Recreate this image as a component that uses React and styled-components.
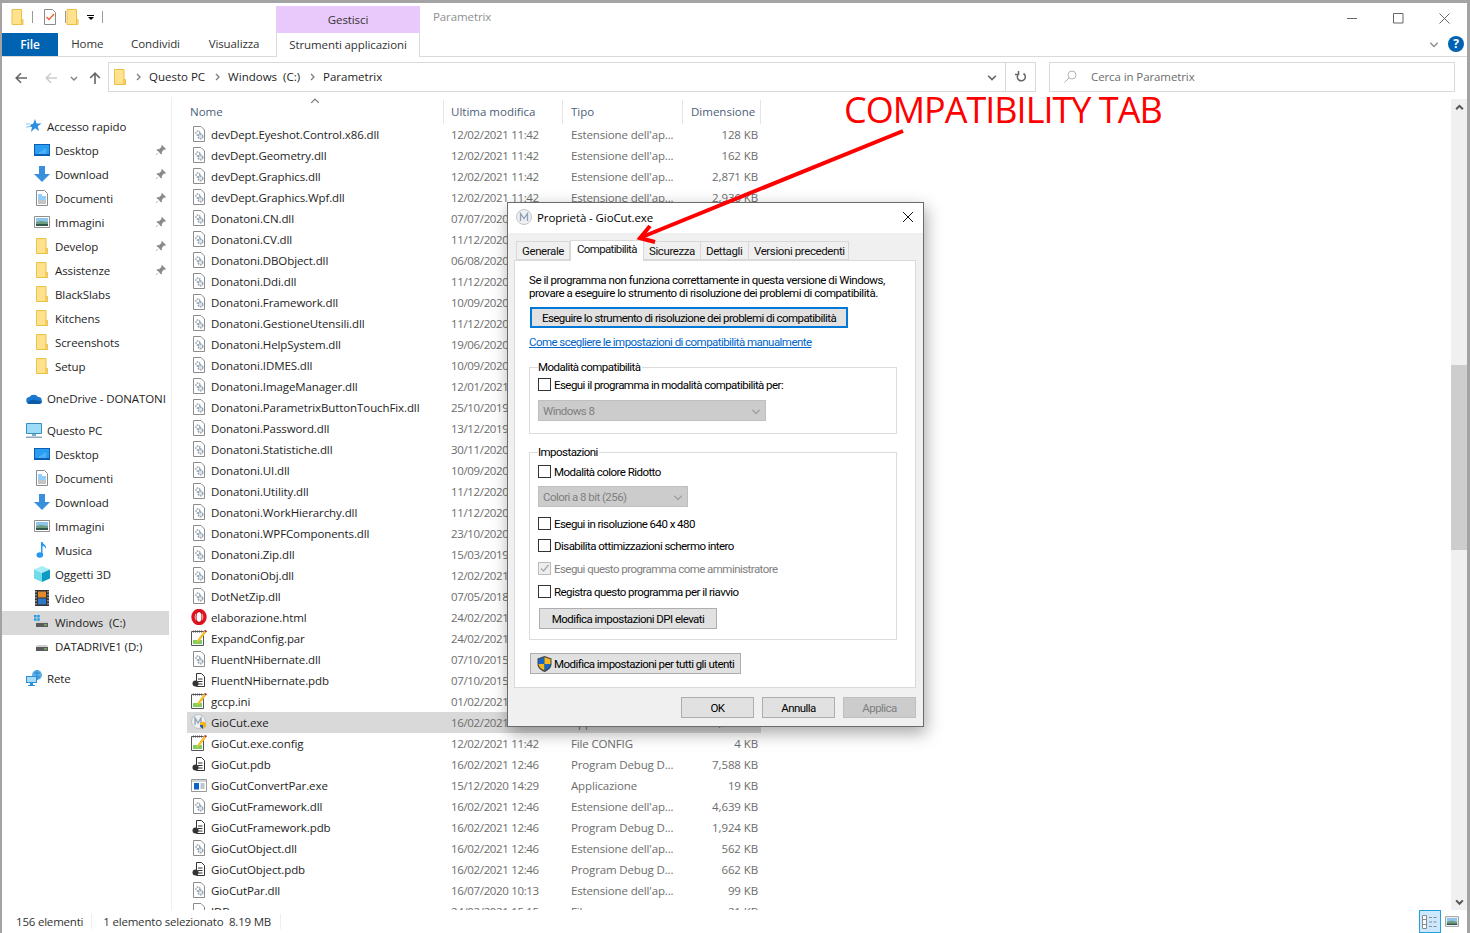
import React from "react"
import styled, { createGlobalStyle } from "styled-components"

const GlobalStyle = createGlobalStyle`
  html, body { margin: 0; padding: 0; background: #a3a3a3; }
  * { box-sizing: border-box; }
  body { font-family: "Open Sans", "Noto Sans", sans-serif; font-size: 11.5px; letter-spacing: -0.1px; }
`

const columns = "257px 119px 120px 78px"

const files = [
  ["dll", "devDept.Eyeshot.Control.x86.dll", "12/02/2021 11:42", "128 KB"],
  ["dll", "devDept.Geometry.dll", "12/02/2021 11:42", "162 KB"],
  ["dll", "devDept.Graphics.dll", "12/02/2021 11:42", "2,871 KB"],
  ["dll", "devDept.Graphics.Wpf.dll", "12/02/2021 11:42", "2,936 KB"],
  ["dll", "Donatoni.CN.dll", "07/07/2020"],
  ["dll", "Donatoni.CV.dll", "11/12/2020"],
  ["dll", "Donatoni.DBObject.dll", "06/08/2020"],
  ["dll", "Donatoni.Ddi.dll", "11/12/2020"],
  ["dll", "Donatoni.Framework.dll", "10/09/2020"],
  ["dll", "Donatoni.GestioneUtensili.dll", "11/12/2020"],
  ["dll", "Donatoni.HelpSystem.dll", "19/06/2020"],
  ["dll", "Donatoni.IDMES.dll", "10/09/2020"],
  ["dll", "Donatoni.ImageManager.dll", "12/01/2021"],
  ["dll", "Donatoni.ParametrixButtonTouchFix.dll", "25/10/2019"],
  ["dll", "Donatoni.Password.dll", "13/12/2019"],
  ["dll", "Donatoni.Statistiche.dll", "30/11/2020"],
  ["dll", "Donatoni.UI.dll", "10/09/2020"],
  ["dll", "Donatoni.Utility.dll", "11/12/2020"],
  ["dll", "Donatoni.WorkHierarchy.dll", "11/12/2020"],
  ["dll", "Donatoni.WPFComponents.dll", "23/10/2020"],
  ["dll", "Donatoni.Zip.dll", "15/03/2019"],
  ["dll", "DonatoniObj.dll", "12/02/2021"],
  ["dll", "DotNetZip.dll", "07/05/2018"],
  ["opera", "elaborazione.html", "24/02/2021"],
  ["cfg", "ExpandConfig.par", "24/02/2021"],
  ["dll", "FluentNHibernate.dll", "07/10/2015"],
  ["pdb", "FluentNHibernate.pdb", "07/10/2015"],
  ["cfg", "gccp.ini", "01/02/2021"],
  ["gio", "GioCut.exe", "16/02/2021 12:46", "8,389 KB", "Applicazione"],
  ["cfg", "GioCut.exe.config", "12/02/2021 11:42", "4 KB", "File CONFIG"],
  ["pdb", "GioCut.pdb", "16/02/2021 12:46", "7,588 KB"],
  ["app", "GioCutConvertPar.exe", "15/12/2020 14:29", "19 KB", "Applicazione"],
  ["dll", "GioCutFramework.dll", "16/02/2021 12:46", "4,639 KB"],
  ["pdb", "GioCutFramework.pdb", "16/02/2021 12:46", "1,924 KB"],
  ["dll", "GioCutObject.dll", "16/02/2021 12:46", "562 KB"],
  ["pdb", "GioCutObject.pdb", "16/02/2021 12:46", "662 KB"],
  ["dll", "GioCutPar.dll", "16/07/2020 10:13", "99 KB"],
  ["blank", "IDB", "24/02/2021 15:15", "21 KB", "File"],
]

const typeByKind = {
  dll: "Estensione dell'ap...",
  pdb: "Program Debug D...",
  cfg: "File",
  opera: "Opera Web Docu...",
}

/* icons */
const FolderIcon = ({ w = 12, h = 16 }) => (
  <svg width={w} height={h} viewBox="0 0 12 16">
    <path d="M.5.5h9.5v15H.5z" fill="#ffe28e" stroke="#ecc044" />
    <path d="M10 10.5h1.5v5H10z" fill="#ffe28e" stroke="#ecc044" />
  </svg>
)

const DllIcon = () => (
  <svg width="14" height="16" viewBox="0 0 14 16">
    <path d="M1.500.5h7.500l3.500 3.500v11.500h-11z" fill="#fff" stroke="#8c8c8c" />
    <circle cx="6" cy="7" r="2" fill="none" stroke="#8fa3b5" strokeWidth="1.400" strokeDasharray="1.600 .8" />
    <circle cx="8.500" cy="10.500" r="2.400" fill="#dce4ea" stroke="#8f9aa5" strokeWidth="1.200" strokeDasharray="1.600 .8" />
  </svg>
)

const PdbIcon = () => (
  <svg width="14" height="16" viewBox="0 0 14 16">
    <path d="M4.500 1.500h5l3 3v10h-8z" fill="#fff" stroke="#333" />
    <path d="M6 7h4.500M6 9.500h4.500M6 12h4.500" stroke="#333" />
    <circle cx="3.500" cy="11.500" r="3" fill="#333" />
  </svg>
)

const CfgIcon = () => (
  <svg width="16" height="16" viewBox="0 0 16 16">
    <path d="M.5 1.500h12v14H.5z" fill="#fff" stroke="#555" />
    <path d="M2 1.500h9" stroke="#555" strokeDasharray="1 1" strokeWidth="2" />
    <path d="M2 10h9v4H2z" fill="#7fcf5e" />
    <path d="M5 13l2-4 6-8 2 1.500-6 8z" fill="#f0c030" />
    <path d="M13 1l2 1.500 1-1.500-2-1z" fill="#b52020" />
  </svg>
)

const OperaIcon = () => (
  <svg width="16" height="16" viewBox="0 0 16 16">
    <ellipse cx="8" cy="8" rx="6" ry="6.500" fill="none" stroke="#e0121f" strokeWidth="3.400" />
    <ellipse cx="8" cy="8" rx="3" ry="5.800" fill="none" stroke="#b80c18" strokeWidth="1" />
  </svg>
)

const GioIcon = () => (
  <svg width="16" height="16" viewBox="0 0 16 16">
    <circle cx="7.500" cy="7.500" r="7" fill="#eef0f2" stroke="#b9c0c8" />
    <path d="M4 11V4l3 5 3-5v7" fill="none" stroke="#8f9fb5" strokeWidth="1.300" />
    <path d="M9 9l3-1.500 3 1.500v3.500l-3 2.500-3-2.500z" fill="#f2b619" />
    <path d="M12 7.500v3.500H9v1.500l3 2.500z" fill="#1c5fc0" />
  </svg>
)

const AppIcon = () => (
  <svg width="16" height="14" viewBox="0 0 16 14">
    <path d="M.5 1.500h15v12H.5z" fill="#fff" stroke="#9a9a9a" />
    <path d="M1 2h14v2H1z" fill="#cfd6dd" />
    <path d="M3 5h5v6.500H3z" fill="#0a64c8" />
    <path d="M9.500 6h4M9.500 8h4M9.500 10h4" stroke="#7a8a9a" />
  </svg>
)

const BlankIcon = () => (
  <svg width="14" height="16" viewBox="0 0 14 16">
    <path d="M1.500.5h7.500l3.500 3.500v11.500h-11z" fill="#fff" stroke="#8c8c8c" />
  </svg>
)

const fileIcons = { dll: DllIcon, pdb: PdbIcon, cfg: CfgIcon, opera: OperaIcon, gio: GioIcon, app: AppIcon, blank: BlankIcon }

const StarIcon = () => (
  <svg width="16" height="14" viewBox="0 0 16 14">
    <path d="M9 0l1.600 4.400H15.500l-3.800 2.900 1.400 4.700L9 9.200 5 13l1-5L1 7h3l1.500-2H7z" fill="#2d8ee0" />
    <path d="M0 5h4M0 8h3" stroke="#8cc4f0" />
  </svg>
)

const DesktopIcon = () => (
  <svg width="16" height="12" viewBox="0 0 16 12">
    <path d="M0 0h16v12H0z" fill="#0a5fb4" />
    <path d="M1 1h14v9H1z" fill="#2b9df0" />
    <path d="M3 10l9-6v6z" fill="#4db0f5" />
  </svg>
)

const DownloadIcon = () => (
  <svg width="16" height="16" viewBox="0 0 16 16">
    <path d="M5 0h6v8h5l-8 8-8-8h5z" fill="#3a8fdc" />
  </svg>
)

const DocIcon = () => (
  <svg width="12" height="16" viewBox="0 0 12 16">
    <path d="M.5.5h8l3 3v12H.5z" fill="#fff" stroke="#8a8a8a" />
    <path d="M2 5h4M2 7h8M2 9h8" stroke="#2a9df0" />
    <path d="M2 11h8M2 13h8" stroke="#8a8a8a" />
  </svg>
)

const PictureIcon = ({ w = 16, h = 12 }) => (
  <svg width={w} height={h} viewBox="0 0 16 12">
    <path d="M.5.500h15v11H.5z" fill="#fff" stroke="#8f8f8f" />
    <path d="M2 2h12v4H2z" fill="#8fc5ea" />
    <path d="M2 6l5-1 7 1v2H2z" fill="#6f9c84" />
    <path d="M2 8h12v2H2z" fill="#33574a" />
  </svg>
)

const MusicIcon = () => (
  <svg width="12" height="16" viewBox="0 0 12 16">
    <path d="M5 0h1.500c.4 2.500 4.500 3 3.500 7-.5-2-2-3-3.500-3v9H5z" fill="#2597ee" />
    <ellipse cx="3.800" cy="13" rx="3.300" ry="2.800" fill="#2597ee" />
  </svg>
)

const CubeIcon = () => (
  <svg width="16" height="16" viewBox="0 0 16 16">
    <path d="M8 0l8 3.500L8 7 0 3.500z" fill="#a8ecf5" />
    <path d="M0 3.500L8 7v9l-8-3.500z" fill="#6fdcea" />
    <path d="M16 3.500L8 7v9l8-3.500z" fill="#0d9bc4" />
  </svg>
)

const VideoIcon = () => (
  <svg width="14" height="16" viewBox="0 0 14 16">
    <path d="M0 0h14v16H0z" fill="#333" />
    <path d="M3 1.500h8v6H3z" fill="#e08a2c" />
    <path d="M3 8.500h8v6H3z" fill="#2d78c8" />
    <path d="M1 1v14M13 1v14" stroke="#ddd" strokeDasharray="1.500 1.500" />
  </svg>
)

const DriveIcon = ({ windows }) => (
  <svg width="16" height="16" viewBox="0 0 16 16">
    {windows && <path d="M0 1h2.500v2.500H0zM3.200 1h2.500v2.500H3.200zM0 4.200h2.500v2.500H0zM3.200 4.200h2.500v2.500H3.200z" fill="#1e9be8" />}
    <path d="M2 9l1-2h10l1 2z" fill="#d0d0d0" />
    <path d="M2 9h12v4H2z" fill="#5a5a5a" />
    <path d="M10 10.500h3v1h-3z" fill="#8ce06a" />
  </svg>
)

const CloudIcon = () => (
  <svg width="16" height="11" viewBox="0 0 16 11">
    <path d="M4 11a3.500 3.500 0 0 1-.5-7A5 5 0 0 1 12 4a3.500 3.500 0 0 1 .5 7z" fill="#1a78d0" />
    <path d="M2 11c0-3 3-5 7-4 3 .5 6 1 7 1.500 0 1.500-1.500 2.500-3 2.500z" fill="#0e5ca8" />
  </svg>
)

const PcIcon = () => (
  <svg width="16" height="15" viewBox="0 0 16 15">
    <path d="M.5.500h15v10H.5z" fill="#9fdcf8" stroke="#3a8dbc" />
    <path d="M6 11h4v2H6z" fill="#7faec8" />
    <path d="M0 13.500h16V15H0z" fill="#8fa8ba" />
  </svg>
)

const NetIcon = () => (
  <svg width="16" height="16" viewBox="0 0 16 16">
    <circle cx="11" cy="5" r="5" fill="#5fb0e8" />
    <path d="M8 3h6M8 7h6M11 0v10" stroke="#2c86c8" />
    <path d="M0 6h11v7H0z" fill="#2a8fd8" />
    <path d="M1 7h9v5H1z" fill="#a8dcf8" />
    <path d="M4 13h3v2H4z" fill="#2a8fd8" />
    <path d="M2 15h7v1H2z" fill="#2a8fd8" />
  </svg>
)

const PinIcon = () => (
  <svg width="10" height="10" viewBox="0 0 10 10">
    <path d="M6 0l4 4-1 .8-1-.3L5.800 7 6 8.500 5 9.500 3 7 .5 10 0 9.500 3 7 .5 5 1.500 4 3 4.200 5.500 2l-.3-1z" fill="#8a8a8a" />
  </svg>
)

const Chevron = ({ dir = "right", size = 8, color = "#808080", weight = 1.4 }) => {
  const d = { right: "M3 1l3 3-3 3", down: "M1 3l3 3 3-3", up: "M1 5.500l3-3 3 3" }[dir]
  return (
    <svg width={size} height={size} viewBox="0 0 8 8">
      <path d={d} fill="none" stroke={color} strokeWidth={weight} />
    </svg>
  )
}

const Arrow = ({ left, color }) => (
  <svg width="12" height="12" viewBox="0 0 12 12">
    <path d={left ? "M12 6H1.500M6 1.200L1.200 6 6 10.800" : "M6 12V1.500M1.200 6L6 1.200 10.800 6"} fill="none" stroke={color} strokeWidth="1.600" />
  </svg>
)

const CheckListIcon = () => (
  <svg width="12" height="16" viewBox="0 0 12 16">
    <path d="M.5.500h8l3 3v12H.5z" fill="#fff" stroke="#8a8a8a" />
    <path d="M2.500 8l2.500 2.500L10 5" fill="none" stroke="#e8602c" strokeWidth="1.300" />
  </svg>
)

const ShieldIcon = () => (
  <svg width="15" height="16" viewBox="0 0 15 16">
    <path d="M7.500 0L14.500 2.500V8c0 4-3.500 6.500-7 8-3.500-1.500-7-4-7-8V2.500z" fill="#444" />
    <path d="M7.500 1.300v6.700H1.500V3.200z" fill="#1668c8" />
    <path d="M7.500 1.300l6 1.900V8h-6z" fill="#f5b81f" />
    <path d="M1.500 8h6v6.500C4.500 13.200 1.700 11 1.500 8z" fill="#f5b81f" />
    <path d="M7.500 8h6c-.2 3-3 5.200-6 6.500z" fill="#1668c8" />
  </svg>
)

/* page */
const Frame = styled.div`
  position: relative;
  width: 1470px;
  height: 933px;
  overflow: hidden;
  padding: 3px 3px 0 2px;
  background: #a3a3a3;
`

const Explorer = styled.div`
  display: flex;
  flex-direction: column;
  height: 100%;
  background: #fff;
  color: #1e1e1e;
`

const TitleRow = styled.div`
  display: flex;
  height: 30px;
  flex: none;
`

const QuickAccess = styled.div`
  display: flex;
  align-items: center;
  width: 274px;
  padding: 0 0 2px 9px;
`

const QuickSep = styled.span`
  width: 1px;
  height: 12px;
  background: #9a9a9a;
  margin: ${p => p.$margin};
`

const QuickDrop = styled.span`
  display: flex;
  flex-direction: column;
  align-items: center;
  gap: 1px;
  margin-left: 8px;
  &::before { content: ""; width: 7px; height: 1px; background: #000; }
  &::after { content: ""; border: 3.5px solid transparent; border-top-color: #000; border-bottom: 0; }
`

const ContextTab = styled.div`
  width: 144px;
  margin-top: 3px;
  background: #e9c9fb;
  color: #333;
  display: flex;
  align-items: center;
  justify-content: center;
  padding-bottom: 1px;
`

const WindowTitle = styled.div`
  margin: 6px 0 0 13px;
  color: #8f8f8f;
`

const WindowControls = styled.div`
  display: flex;
  margin-left: auto;
`

const ControlButton = styled.div`
  width: 46px;
  height: 30px;
  display: flex;
  align-items: center;
  justify-content: center;
`

const RibbonRow = styled.div`
  display: flex;
  height: 24px;
  flex: none;
  border-bottom: 1px solid #dadada;
`

const FileTab = styled.div`
  width: 56px;
  background: #0063b1;
  color: #fff;
  font-weight: 600;
  font-size: 12px;
  display: flex;
  align-items: center;
  justify-content: center;
`

const RibbonTab = styled.div`
  display: flex;
  align-items: center;
  justify-content: center;
  width: ${p => p.$w}px;
  padding-bottom: 2px;
  color: #333;
`

const ToolsTab = styled(RibbonTab)`
  width: 144px;
  margin-left: 2.5px;
  border-left: 1px solid #dadada;
  border-right: 1px solid #dadada;
  height: 24px;
  background: #fff;
`

const RibbonRight = styled.div`
  display: flex;
  align-items: center;
  margin-left: auto;
  padding: 0 3px 1px 0;
  gap: 9px;
`

const HelpBadge = styled.span`
  width: 16px;
  height: 16px;
  border-radius: 50%;
  background: #0063b1;
  color: #fff;
  font-weight: 700;
  font-size: 12px;
  line-height: 16px;
  text-align: center;
`

const NavRow = styled.div`
  display: flex;
  align-items: center;
  height: 40px;
  flex: none;
  padding-right: 12px;
`

const NavButtons = styled.div`
  display: flex;
  align-items: center;
  width: 106px;
  padding: 2px 0 0 13px;
`

const NavSpace = styled.span`
  display: flex;
  margin-left: ${p => p.$gap}px;
`

const AddressBox = styled.div`
  display: flex;
  align-items: center;
  width: 928px;
  height: 30px;
  padding-left: 5px;
  border: 1px solid #d9d9d9;
  color: #1e1e1e;
`

const Crumb = styled.span`
  white-space: pre;
  padding-bottom: 2px;
  letter-spacing: 0;
`

const CrumbSep = styled.span`
  display: flex;
  justify-content: center;
  width: 23px;
`

const AddressEnd = styled.div`
  display: flex;
  align-items: center;
  margin-left: auto;
  height: 100%;
`

const RefreshCell = styled.div`
  display: flex;
  align-items: center;
  justify-content: center;
  width: 30px;
  height: 100%;
  margin-left: 8px;
  border-left: 1px solid #d9d9d9;
`

const SearchBox = styled.div`
  display: flex;
  align-items: center;
  gap: 14px;
  width: 406px;
  height: 30px;
  margin-left: 13px;
  padding: 0 0 2px 14px;
  border: 1px solid #d9d9d9;
  color: #6d6d6d;
`

const Body = styled.div`
  display: flex;
  flex: 1;
  min-height: 0;
`

const Sidebar = styled.nav`
  flex: none;
  width: 170px;
  padding-top: 18px;
  border-right: 1px solid #efefef;
`

const NavGroup = styled.div`
  margin-bottom: 8px;
`

const NavItem = styled.div`
  display: flex;
  align-items: center;
  width: 167px;
  height: 24px;
  padding: 0 0 2px ${p => (p.$nested ? 32 : 24)}px;
  background: ${p => (p.$selected ? "#d9d9d9" : "transparent")};
  white-space: pre;
`

const NavIconSlot = styled.span`
  display: flex;
  justify-content: center;
  align-items: center;
  width: 16px;
  margin-right: 5px;
`

const PinSlot = styled.span`
  display: flex;
  margin-left: auto;
  margin-right: 3px;
`

const ListPane = styled.div`
  position: relative;
  flex: 1;
  min-width: 0;
  overflow: hidden;
  padding: 3px 0 0 15px;
`

const HeaderRow = styled.div`
  display: grid;
  grid-template-columns: ${columns};
  width: 574px;
  height: 24px;
  letter-spacing: 0;
`

const HeaderCell = styled.div`
  display: flex;
  align-items: center;
  padding: 0 0 2px ${p => p.$pad}px;
  border-right: 1px solid #e5e5e5;
  color: #4c607a;
`

const SortMark = styled.span`
  position: absolute;
  left: 138px;
  top: -1px;
  display: flex;
`

const FileRow = styled.div`
  display: grid;
  grid-template-columns: ${columns};
  align-items: center;
  width: 574px;
  height: 21px;
  padding-top: 1px;
  white-space: nowrap;
  background: ${p => (p.$selected ? "#d9d9d9" : "transparent")};
`

const NameCell = styled.div`
  display: flex;
  align-items: center;
  padding: 0 0 2px 4px;
  height: 17px;
`

const FileIconSlot = styled.span`
  display: flex;
  justify-content: center;
  width: 16px;
  margin-right: 4px;
`

const DateCell = styled.div`
  padding-left: 7px;
  height: 17px;
  color: #6d6d6d;
  letter-spacing: -0.35px;
`

const TypeCell = styled.div`
  padding-left: 8px;
  height: 17px;
  color: #6d6d6d;
  letter-spacing: -0.15px;
`

const SizeCell = styled.div`
  padding-right: 3px;
  height: 17px;
  text-align: right;
  color: #6d6d6d;
`

const Scrollbar = styled.div`
  display: flex;
  flex-direction: column;
  flex: none;
  width: 16px;
  margin-top: 2px;
  background: #f0f0f0;
`

const ScrollEnd = styled.div`
  display: flex;
  align-items: center;
  justify-content: center;
  height: 17px;
  flex: none;
`

const ScrollTrack = styled.div`
  flex: 1;
`

const ScrollThumb = styled.div`
  height: 185px;
  margin-top: 249px;
  background: #cdcdcd;
`

const StatusBar = styled.div`
  display: flex;
  align-items: center;
  height: 23px;
  flex: none;
  padding-left: 14px;
  color: #333;
  letter-spacing: -0.2px;
  white-space: pre;
`

const StatusSep = styled.span`
  width: 1px;
  height: 15px;
  background: #eee;
  margin: ${p => p.$margin};
`

const ViewToggle = styled.div`
  display: flex;
  align-items: center;
  justify-content: center;
  width: ${p => p.$w}px;
  height: 23px;
  margin-left: ${p => p.$left || 0}px;
  background: ${p => (p.$active ? "#cce8ff" : "transparent")};
  border: ${p => (p.$active ? "1px solid #26a0da" : "0")};
`

const StatusRight = styled.div`
  display: flex;
  align-items: center;
  margin-left: auto;
  padding-right: 8px;
`

/* dialog */
const Dialog = styled.div`
  position: absolute;
  left: 507px;
  top: 202px;
  display: flex;
  flex-direction: column;
  width: 417px;
  height: 525px;
  border: 1px solid #6b6b6b;
  background: #f0f0f0;
  box-shadow: 2px 6px 16px rgba(0, 0, 0, 0.35);
  color: #000;
  font-family: "Roboto", "Liberation Sans", sans-serif;
  font-size: 11.5px;
  letter-spacing: -0.55px;
  white-space: nowrap;
`

const DialogTitle = styled.div`
  display: flex;
  align-items: center;
  gap: 5px;
  height: 30px;
  flex: none;
  padding: 0 9px 2px 8px;
  background: #fff;
  font-family: "Open Sans", sans-serif;
  letter-spacing: -0.1px;
`

const DialogClose = styled.span`
  display: flex;
  margin-left: auto;
`

const TabStrip = styled.div`
  display: flex;
  align-items: flex-end;
  height: 27px;
  flex: none;
  padding-left: 8px;
`

const DialogTab = styled.div`
  display: flex;
  align-items: center;
  height: ${p => (p.$active ? 21 : 19)}px;
  width: ${p => p.$w}px;
  padding: 0 0 ${p => (p.$active ? 4 : 0)}px ${p => (p.$active ? 6 : 5)}px;
  margin-bottom: ${p => (p.$active ? -1 : 0)}px;
  position: relative;
  letter-spacing: ${p => (p.$active ? -0.65 : -0.4)}px;
  background: ${p => (p.$active ? "#fff" : "#f0f0f0")};
  border: 1px solid #d9d9d9;
  border-bottom: ${p => (p.$active ? 0 : "1px solid #d9d9d9")};
  border-left-width: ${p => (p.$first || p.$active ? 1 : 0)}px;
  color: #111;
`

const TabPanel = styled.div`
  width: 402px;
  height: 428px;
  flex: none;
  margin-left: 6px;
  padding: 13px 14px 0;
  border: 1px solid #d9d9d9;
  background: #fff;
`

const Intro = styled.p`
  margin: 0;
  line-height: 13px;
  letter-spacing: -0.45px;
`

const PushButton = styled.div`
  display: flex;
  align-items: center;
  justify-content: ${p => (p.$start ? "flex-start" : "center")};
  width: ${p => p.$w}px;
  height: 21px;
  margin-top: ${p => p.$top || 0}px;
  margin-left: ${p => (p.$inset ? 1 : 0)}px;
  padding-left: ${p => (p.$start ? 6 : 0)}px;
  gap: 2px;
  color: ${p => (p.$disabled ? "#808080" : "#000")};
  background: ${p => (p.$disabled ? "#cccccc" : "#e1e1e1")};
  border: ${p => (p.$focus ? 2 : 1)}px solid ${p => (p.$disabled ? "#bfbfbf" : p.$focus ? "#0078d7" : "#adadad")};
`

const HelpLink = styled.a`
  display: block;
  margin-top: 7px;
  line-height: 14px;
  color: #0066cc;
  text-decoration: underline;
`

const Group = styled.fieldset`
  width: 368px;
  margin: ${p => p.$top}px 0 0;
  padding: 0 8px ${p => p.$bottom}px;
  border: 1px solid #dcdcdc;
  min-inline-size: 0;
`

const GroupTitle = styled.legend`
  padding: 0 1px 0 0;
  margin-left: 0;
  line-height: 14px;
`

const CheckRow = styled.div`
  display: flex;
  align-items: center;
  gap: 3px;
  height: 13px;
  margin-top: ${p => p.$top}px;
  color: ${p => (p.$disabled ? "#808080" : "#000")};
`

const CheckBox = styled.span`
  display: flex;
  align-items: center;
  justify-content: center;
  width: 13px;
  height: 13px;
  flex: none;
  background: ${p => (p.$disabled ? "#eeeeee" : "#fff")};
  border: 1px solid ${p => (p.$disabled ? "#bbbbbb" : "#333")};
`

const ComboBox = styled.div`
  display: flex;
  align-items: center;
  justify-content: space-between;
  width: ${p => p.$w}px;
  height: 21px;
  margin-top: ${p => p.$top}px;
  padding: 0 4px;
  background: #cccccc;
  border: 1px solid #bfbfbf;
  color: #808080;
`

const DialogFooter = styled.div`
  display: flex;
  justify-content: flex-end;
  gap: 8px;
  padding: 9px 7px 0 0;
`

/* annotation */
const Callout = styled.div`
  position: absolute;
  left: 844px;
  top: 85px;
  color: #ff0000;
  font-size: 36px;
  line-height: 50px;
  letter-spacing: -1px;
  white-space: nowrap;
`

const CalloutArrow = styled.svg`
  position: absolute;
  left: 630px;
  top: 125px;
`

const navTop = [
  [DesktopIcon, "Desktop", true],
  [DownloadIcon, "Download", true],
  [DocIcon, "Documenti", true],
  [PictureIcon, "Immagini", true],
  [FolderIcon, "Develop", true],
  [FolderIcon, "Assistenze", true],
  [FolderIcon, "BlackSlabs"],
  [FolderIcon, "Kitchens"],
  [FolderIcon, "Screenshots"],
  [FolderIcon, "Setup"],
]

const navPc = [
  [DesktopIcon, "Desktop"],
  [DocIcon, "Documenti"],
  [DownloadIcon, "Download"],
  [PictureIcon, "Immagini"],
  [MusicIcon, "Musica"],
  [CubeIcon, "Oggetti 3D"],
  [VideoIcon, "Video"],
]

const NavLine = ({ icon: Icon, label, pinned }) => (
  <NavItem $nested>
    <NavIconSlot><Icon /></NavIconSlot>
    {label}
    {pinned && <PinSlot><PinIcon /></PinSlot>}
  </NavItem>
)

const Check = ({ children, top, disabled }) => (
  <CheckRow $top={top} $disabled={disabled}>
    <CheckBox $disabled={disabled}>
      {disabled && (
        <svg width="11" height="11" viewBox="0 0 11 11">
          <path d="M2 5.500l2.500 2.500L9.500 2" fill="none" stroke="#a8a8a8" strokeWidth="1.300" />
        </svg>
      )}
    </CheckBox>
    {children}
  </CheckRow>
)

export default function App() {
  return (
    <Frame>
      <GlobalStyle />
      <Explorer>
        <TitleRow>
          <QuickAccess>
            <FolderIcon w={13} h={16} />
            <QuickSep $margin="0 11px 0 8px" />
            <CheckListIcon />
            <QuickSep $margin="0 0 0 9px" />
            <FolderIcon w={13} h={16} />
            <QuickDrop />
            <QuickSep $margin="0 0 0 8px" />
          </QuickAccess>
          <ContextTab>Gestisci</ContextTab>
          <WindowTitle>Parametrix</WindowTitle>
          <WindowControls>
            <ControlButton>
              <svg width="11" height="11" viewBox="0 0 11 11"><path d="M0 5.500h10" stroke="#666" /></svg>
            </ControlButton>
            <ControlButton>
              <svg width="11" height="11" viewBox="0 0 11 11"><path d="M.5.500h9.500v9.500H.5z" fill="none" stroke="#666" /></svg>
            </ControlButton>
            <ControlButton>
              <svg width="11" height="11" viewBox="0 0 11 11"><path d="M.5.500l10 10M10.500.500l-10 10" stroke="#666" /></svg>
            </ControlButton>
          </WindowControls>
        </TitleRow>

        <RibbonRow>
          <FileTab>File</FileTab>
          <RibbonTab $w={58.5}>Home</RibbonTab>
          <RibbonTab $w={78}>Condividi</RibbonTab>
          <RibbonTab $w={79}>Visualizza</RibbonTab>
          <ToolsTab>Strumenti applicazioni</ToolsTab>
          <RibbonRight>
            <Chevron dir="down" size={10} color="#8a8a8a" weight={1} />
            <HelpBadge>?</HelpBadge>
          </RibbonRight>
        </RibbonRow>

        <NavRow>
          <NavButtons>
            <Arrow left color="#666" />
            <NavSpace $gap={18}><Arrow left color="#ccc" /></NavSpace>
            <NavSpace $gap={13}><Chevron dir="down" /></NavSpace>
            <NavSpace $gap={11}><Arrow color="#666" /></NavSpace>
          </NavButtons>
          <AddressBox>
            <FolderIcon />
            <CrumbSep><Chevron /></CrumbSep>
            <Crumb>Questo PC</Crumb>
            <CrumbSep><Chevron /></CrumbSep>
            <Crumb>Windows  (C:)</Crumb>
            <CrumbSep><Chevron /></CrumbSep>
            <Crumb>Parametrix</Crumb>
            <AddressEnd>
              <Chevron dir="down" size={10} color="#666" weight={1.3} />
              <RefreshCell>
                <svg width="12" height="12" viewBox="0 0 12 12">
                  <path d="M8.500 2.500a4 4 0 1 1-5 .5M3.500 0v3.500H0" fill="none" stroke="#666" strokeWidth="1.500" />
                </svg>
              </RefreshCell>
            </AddressEnd>
          </AddressBox>
          <SearchBox>
            <svg width="13" height="13" viewBox="0 0 13 13">
              <circle cx="8" cy="5" r="4" fill="none" stroke="#b5b5b5" />
              <path d="M5 8l-4.500 4.500" stroke="#b5b5b5" />
            </svg>
            Cerca in Parametrix
          </SearchBox>
        </NavRow>

        <Body>
          <Sidebar>
            <NavGroup>
              <NavItem><NavIconSlot><StarIcon /></NavIconSlot>Accesso rapido</NavItem>
              {navTop.map(([icon, label, pinned]) => (
                <NavLine key={label} icon={icon} label={label} pinned={pinned} />
              ))}
            </NavGroup>
            <NavGroup>
              <NavItem><NavIconSlot><CloudIcon /></NavIconSlot>OneDrive - DONATONI</NavItem>
            </NavGroup>
            <NavGroup>
              <NavItem><NavIconSlot><PcIcon /></NavIconSlot>Questo PC</NavItem>
              {navPc.map(([icon, label]) => (
                <NavLine key={label} icon={icon} label={label} />
              ))}
              <NavItem $nested $selected><NavIconSlot><DriveIcon windows /></NavIconSlot>Windows  (C:)</NavItem>
              <NavItem $nested><NavIconSlot><DriveIcon /></NavIconSlot>DATADRIVE1 (D:)</NavItem>
            </NavGroup>
            <NavGroup>
              <NavItem><NavIconSlot><NetIcon /></NavIconSlot>Rete</NavItem>
            </NavGroup>
          </Sidebar>

          <ListPane>
            <SortMark><Chevron dir="up" size={10} color="#777" weight={1} /></SortMark>
            <HeaderRow>
              <HeaderCell $pad={3}>Nome</HeaderCell>
              <HeaderCell $pad={7}>Ultima modifica</HeaderCell>
              <HeaderCell $pad={8}>Tipo</HeaderCell>
              <HeaderCell $pad={8}>Dimensione</HeaderCell>
            </HeaderRow>
            {files.map(([kind, name, date, size, type]) => {
              const Icon = fileIcons[kind]
              return (
                <FileRow key={name} $selected={name === "GioCut.exe"}>
                  <NameCell>
                    <FileIconSlot><Icon /></FileIconSlot>
                    {name}
                  </NameCell>
                  <DateCell>{date}</DateCell>
                  <TypeCell>{type || typeByKind[kind]}</TypeCell>
                  <SizeCell>{size}</SizeCell>
                </FileRow>
              )
            })}
          </ListPane>

          <Scrollbar>
            <ScrollEnd><Chevron dir="up" size={9} color="#555" weight={1.8} /></ScrollEnd>
            <ScrollTrack><ScrollThumb /></ScrollTrack>
            <ScrollEnd><Chevron dir="down" size={9} color="#555" weight={1.8} /></ScrollEnd>
          </Scrollbar>
        </Body>

        <StatusBar>
          156 elementi
          <StatusSep $margin="0 11px 0 8px" />
          1 elemento selezionato  8.19 MB
          <StatusSep $margin="0 0 0 9px" />
          <StatusRight>
            <ViewToggle $active $w={22}>
              <svg width="16" height="16" viewBox="0 0 16 16">
                <path d="M.5 1.500h4v13h-4z" fill="#fff" stroke="#8a8a8a" />
                <path d="M.5 5.500h4M.5 10.500h4M7 3.500h3M11.500 3.500h3M7 8h3M11.500 8h3M7 12.500h3M11.500 12.500h3" stroke="#8a8a8a" />
              </svg>
            </ViewToggle>
            <ViewToggle $w={14} $left={4}><PictureIcon w={14} h={11} /></ViewToggle>
          </StatusRight>
        </StatusBar>
      </Explorer>

      <Dialog>
        <DialogTitle>
          <svg width="16" height="16" viewBox="0 0 16 16">
            <circle cx="8" cy="8" r="7.500" fill="#eef0f2" stroke="#c0c6cc" />
            <path d="M4.500 12V4.500l3.500 5 3.500-5V12" fill="none" stroke="#8f9fb5" strokeWidth="1.300" />
          </svg>
          Proprietà - GioCut.exe
          <DialogClose>
            <svg width="12" height="12" viewBox="0 0 12 12"><path d="M1 1l10 10M11 1L1 11" stroke="#111" /></svg>
          </DialogClose>
        </DialogTitle>
        <TabStrip>
          <DialogTab $first $w={54}>Generale</DialogTab>
          <DialogTab $active $w={74}>Compatibilità</DialogTab>
          <DialogTab $w={57}>Sicurezza</DialogTab>
          <DialogTab $w={48}>Dettagli</DialogTab>
          <DialogTab $w={100}>Versioni precedenti</DialogTab>
        </TabStrip>
        <TabPanel>
          <Intro>
            Se il programma non funziona correttamente in questa versione di Windows,
            <br />
            provare a eseguire lo strumento di risoluzione dei problemi di compatibilità.
          </Intro>
          <PushButton $focus $inset $w={318} $top={7}>Eseguire lo strumento di risoluzione dei problemi di compatibilità</PushButton>
          <HelpLink>Come scegliere le impostazioni di compatibilità manualmente</HelpLink>
          <Group $top={11} $bottom={12}>
            <GroupTitle>Modalità compatibilità</GroupTitle>
            <Check top={4}>Esegui il programma in modalità compatibilità per:</Check>
            <ComboBox $w={228} $top={9}>
              Windows 8
              <Chevron dir="down" size={10} color="#a0a0a0" weight={1} />
            </ComboBox>
          </Group>
          <Group $top={11} $bottom={10}>
            <GroupTitle>Impostazioni</GroupTitle>
            <Check top={6}>Modalità colore Ridotto</Check>
            <ComboBox $w={150} $top={8}>
              Colori a 8 bit (256)
              <Chevron dir="down" size={10} color="#a0a0a0" weight={1} />
            </ComboBox>
            <Check top={10}>Esegui in risoluzione 640 x 480</Check>
            <Check top={9}>Disabilita ottimizzazioni schermo intero</Check>
            <Check top={10} disabled>Esegui questo programma come amministratore</Check>
            <Check top={10}>Registra questo programma per il riavvio</Check>
            <PushButton $inset $w={178} $top={10}>Modifica impostazioni DPI elevati</PushButton>
          </Group>
          <PushButton $inset $start $w={211} $top={13}>
            <ShieldIcon />
            Modifica impostazioni per tutti gli utenti
          </PushButton>
        </TabPanel>
        <DialogFooter>
          <PushButton $w={73}>OK</PushButton>
          <PushButton $w={73}>Annulla</PushButton>
          <PushButton $w={73} $disabled>Applica</PushButton>
        </DialogFooter>
      </Dialog>

      <Callout>COMPATIBILITY TAB</Callout>
      <CalloutArrow width="280" height="125" viewBox="630 125 280 125">
        <path d="M903 131L642 237" fill="none" stroke="#ff0000" strokeWidth="4" />
        <path d="M655 242L640 238 650 226" fill="none" stroke="#ff0000" strokeWidth="4" />
      </CalloutArrow>
    </Frame>
  )
}
